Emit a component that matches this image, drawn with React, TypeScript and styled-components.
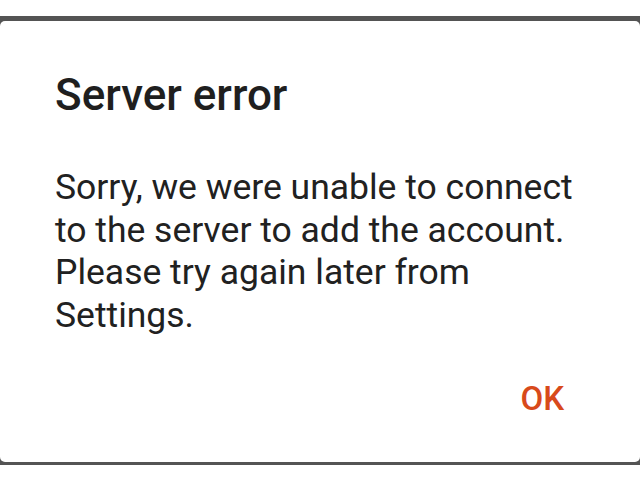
import React from "react";
import styled, { createGlobalStyle } from "styled-components";

const Global = createGlobalStyle`
  html, body { margin: 0; padding: 0; background: #ffffff; }
  body { width: 640px; height: 480px; overflow: hidden; font-family: Roboto, "Noto Sans", sans-serif; }
`;

const Backdrop = styled.div`
  margin-top: 16px;
  background: #545454;
  padding: 5px 0 3px;
`;

const Dialog = styled.div`
  background: #ffffff;
  border-radius: 5px;
  height: 441px;
  box-sizing: border-box;
  padding: 50px 55px 0 55px;
  display: flex;
  flex-direction: column;
`;

const Title = styled.h1`
  margin: 0;
  font-family: Roboto, sans-serif;
  font-weight: 500;
  font-size: 44px;
  line-height: 48px;
  color: #1f1f1f;
`;

const Message = styled.p`
  margin: 47px 0 0;
  font-family: Roboto, sans-serif;
  font-weight: 400;
  font-size: 35.5px;
  line-height: 42.7px;
  color: #212121;
`;

const Actions = styled.div`
  display: flex;
  justify-content: flex-end;
  margin-top: auto;
  padding-bottom: 43px;
  padding-right: 21px;
`;

const OkButton = styled.button`
  border: none;
  background: none;
  padding: 0;
  font-family: Roboto, sans-serif;
  font-weight: 500;
  font-size: 33px;
  line-height: 40px;
  color: #d84a1b;
  cursor: pointer;
`;

export default function App() {
  return (
    <>
      <Global />
      <Backdrop>
        <Dialog>
          <Title>Server error</Title>
          <Message>
            Sorry, we were unable to connect
            <br />
            to the server to add the account.
            <br />
            Please try again later from
            <br />
            Settings.
          </Message>
          <Actions>
            <OkButton>OK</OkButton>
          </Actions>
        </Dialog>
      </Backdrop>
    </>
  );
}
